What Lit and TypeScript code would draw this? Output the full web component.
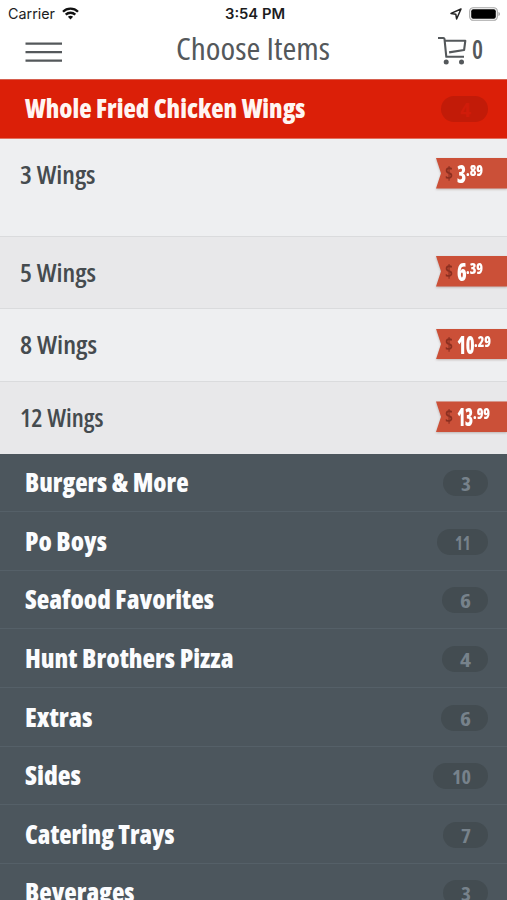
import { LitElement, html, css } from "lit";
import { customElement } from "lit/decorators.js";

@customElement("fit-text")
class FitText extends LitElement {
  static properties = { text: {}, measure: { type: Number }, height: { type: Number }, base: { type: Number } };
  declare text: string;
  declare measure: number;
  declare height: number;
  declare base: number;

  static styles = css`
    :host { display: block; flex: none; }
    .line { display: block; overflow: visible; }
    .glyphs { fill: currentColor; }
  `;

  render() {
    return html`<svg class="line" width=${this.measure} height=${this.height}>
      <text class="glyphs" x="0" y=${this.base} textLength=${this.measure} lengthAdjust="spacingAndGlyphs">${this.text}</text>
    </svg>`;
  }
}

@customElement("status-bar")
class StatusBar extends LitElement {
  static styles = css`
    :host {
      display: grid; grid-template-columns: 1fr auto 1fr; align-items: center;
      height: 27px; padding: 0 7px 0 8px; box-sizing: border-box;
      font-family: Inter, "Liberation Sans", sans-serif; font-size: 14.3px; color: #1c1c1e;
    }
    .left { display: flex; align-items: center; gap: 7px; }
    .time { font-weight: 600; font-size: 13.8px; padding-left: 2px; }
    .right { display: flex; align-items: center; justify-content: flex-end; gap: 7px; }
    .icon { display: block; }
  `;

  render() {
    return html`
      <div class="left">
        <fit-text text="Carrier" .measure=${47} .height=${27} .base=${19}></fit-text>
        <svg class="icon" width="17" height="13" viewBox="0 0 17 13" fill="none" stroke="#111" stroke-width="2.3">
          <path d="M1 4.7C5.1.6 11.9.6 16 4.7" />
          <path d="M3.7 7.7c2.7-2.6 6.9-2.6 9.6 0" />
          <path d="M5.9 9.7c1.5-1.4 3.7-1.4 5.2 0L8.5 12.4z" fill="#111" stroke="none" />
        </svg>
      </div>
      <fit-text class="time" text="3:54 PM" .measure=${60} .height=${27} .base=${18.7}></fit-text>
      <div class="right">
        <svg class="icon" width="12" height="12" viewBox="0 0 12 12" fill="none" stroke="#222" stroke-width="1.5" stroke-linejoin="round">
          <path d="M11 1 1 5.4l4.8.8.8 4.8z" />
        </svg>
        <svg class="icon" width="31" height="14" viewBox="0 0 31 14">
          <rect x=".7" y=".7" width="27.6" height="12.6" rx="3.6" fill="#fff" stroke="#a5a5a5" stroke-width="1.1" />
          <rect x="2.2" y="2.2" width="24.6" height="9.6" rx="2" fill="#000" />
          <path d="M29.5 5v4c.9-.3 1.3-1.1 1.3-2s-.4-1.7-1.3-2z" fill="#999" />
        </svg>
      </div>
    `;
  }
}

@customElement("nav-header")
class NavHeader extends LitElement {
  static styles = css`
    :host {
      display: flex; align-items: flex-start; height: 52px; box-sizing: border-box;
      padding: 0 24px 0 25px; color: #54585b;
    }
    .menu { flex: none; margin-top: 14px; }
    .title { margin-left: 114px; font-size: 31px; font-weight: 400; }
    .cart { display: flex; margin-left: auto; gap: 5px; font-size: 26.5px; font-weight: 600; }
    .cart-icon { flex: none; margin-top: 9px; }
  `;

  render() {
    return html`
      <svg class="menu" width="37" height="23" viewBox="0 0 37 23" stroke="#54585b" stroke-width="2.3">
        <path d="M.5 2.7h36.5M.5 11.2h36.5M.5 19.7h36.5" />
      </svg>
      <fit-text class="title" text="Choose Items" .measure=${154} .height=${50} .base=${32.5}></fit-text>
      <div class="cart">
        <svg class="cart-icon" width="29" height="29" viewBox="0 0 29 29" fill="none" stroke="#54585b" stroke-width="2.1">
          <path d="M0 2h5.4q.9 0 1.1 1L8.3 20.8H26M6.7 4.8h20.6L26.1 14l-15 2.4" stroke-linejoin="round" />
          <circle cx="8.2" cy="26" r="2.5" fill="#54585b" stroke="none" />
          <circle cx="23.5" cy="26" r="2.5" fill="#54585b" stroke="none" />
        </svg>
        <fit-text text="0" .measure=${11} .height=${50} .base=${32}></fit-text>
      </div>
    `;
  }
}

@customElement("category-row")
class CategoryRow extends LitElement {
  static properties = {
    name: {}, measure: { type: Number }, count: {}, digits: { type: Number }, pad: { type: Number },
  };
  declare name: string;
  declare measure: number;
  declare count: string;
  declare digits: number;
  declare pad: number;

  static styles = css`
    :host {
      display: flex; justify-content: space-between; align-items: flex-start;
      height: 58.6px; box-sizing: border-box; padding: 0.5px 18.7px 0 25px;
      background: #4c565d; border-bottom: 1px solid #556068; color: #fbfcfe;
    }
    :host([active]) {
      padding-top: 0; background: #db1f08; border-bottom: 0;
      border-top: 1px solid #d6604f; color: #fff5f2;
    }
    .name { font-size: 25.6px; font-weight: 800; }
    .badge {
      display: flex; flex: none; justify-content: flex-end; box-sizing: border-box; height: 26px;
      margin-top: 16px; padding-right: 17.5px; border-radius: 13px;
      background: #434c51; color: #77828b; font-size: 20px; font-weight: 700;
    }
    :host([active]) .badge { background: #c21b08; color: #d01c0a; }
  `;

  render() {
    return html`
      <fit-text class="name" .text=${this.name} .measure=${this.measure} .height=${56} .base=${37.9}></fit-text>
      <div class="badge" style="width:${this.pad}px">
        <fit-text .text=${this.count} .measure=${this.digits} .height=${26} .base=${20.6}></fit-text>
      </div>
    `;
  }
}

@customElement("item-row")
class ItemRow extends LitElement {
  static properties = {
    name: {}, measure: { type: Number }, whole: {}, wholeMeasure: { type: Number }, cents: {},
  };
  declare name: string;
  declare measure: number;
  declare whole: string;
  declare wholeMeasure: number;
  declare cents: string;

  static styles = css`
    :host {
      display: flex; justify-content: space-between; align-items: flex-start;
      height: 72.7px; box-sizing: border-box; padding-left: 20px;
      background: #eeeff1; border-top: 1px solid #dadbdd; color: #454b4f;
    }
    :host([tall]) { height: 98px; border-top-color: #e2705f; }
    :host([shade]) { background: #e8e8ea; }
    .name { font-size: 24.6px; font-weight: 550; }
    .tag { flex: none; margin-top: 19.5px; filter: drop-shadow(0 1px 1px rgba(90, 60, 50, 0.3)); }
    .ribbon {
      display: flex; width: 71px; height: 30.5px; box-sizing: border-box; padding-left: 9px;
      background: #cb5038; color: #fff; font-weight: 800;
      clip-path: polygon(0 0, 100% 0, 100% 100%, 0 100%, 5px 50%);
    }
    .dollar { color: #8b2f20; font-size: 17px; font-weight: 700; margin-right: 3.5px; }
    .whole { font-size: 25.5px; }
    .cents { font-size: 16.5px; }
  `;

  render() {
    return html`
      <fit-text class="name" .text=${this.name} .measure=${this.measure} .height=${60} .base=${44.8}></fit-text>
      <div class="tag">
        <div class="ribbon">
          <fit-text class="dollar" text="$" .measure=${8} .height=${30} .base=${21.5}></fit-text>
          <fit-text class="whole" .text=${this.whole} .measure=${this.wholeMeasure} .height=${30} .base=${24.8}></fit-text>
          <fit-text class="cents" .text=${this.cents} .measure=${17} .height=${30} .base=${18.2}></fit-text>
        </div>
      </div>
    `;
  }
}

const items = [
  { name: "3 Wings", measure: 75.5, whole: "3", w: 9.2, cents: ".89" },
  { name: "5 Wings", measure: 76, whole: "6", w: 9.7, cents: ".39" },
  { name: "8 Wings", measure: 77, whole: "10", w: 17.7, cents: ".29" },
  { name: "12 Wings", measure: 83.5, whole: "13", w: 16.2, cents: ".99" },
];

const categories = [
  { name: "Burgers & More", measure: 163.5, count: "3", digits: 10, pad: 45.5 },
  { name: "Po Boys", measure: 82, count: "11", digits: 15.5, pad: 51 },
  { name: "Seafood Favorites", measure: 189, count: "6", digits: 11, pad: 46.5 },
  { name: "Hunt Brothers Pizza", measure: 208.5, count: "4", digits: 11, pad: 46.5 },
  { name: "Extras", measure: 67.5, count: "6", digits: 11, pad: 47 },
  { name: "Sides", measure: 56, count: "10", digits: 19, pad: 55 },
  { name: "Catering Trays", measure: 149.5, count: "7", digits: 10, pad: 45.5 },
  { name: "Beverages", measure: 109.5, count: "3", digits: 10, pad: 45.5 },
];

@customElement("app-root")
class AppRoot extends LitElement {
  static styles = css`
    :host {
      display: block; height: 900px; overflow: hidden; background: #fff;
      font-family: "Open Sans", "Noto Sans", sans-serif; font-stretch: 75%;
    }
  `;

  render() {
    return html`
      <status-bar></status-bar>
      <nav-header></nav-header>
      <category-row active name="Whole Fried Chicken Wings" .measure=${280.5} count="4" .digits=${11} .pad=${47}></category-row>
      ${items.map(
        (i, n) => html`<item-row ?tall=${n === 0} ?shade=${n % 2 === 1} .name=${i.name} .measure=${i.measure}
          .whole=${i.whole} .wholeMeasure=${i.w} .cents=${i.cents}></item-row>`,
      )}
      ${categories.map(
        (c) => html`<category-row .name=${c.name} .measure=${c.measure} .count=${c.count}
          .digits=${c.digits} .pad=${c.pad}></category-row>`,
      )}
    `;
  }
}
